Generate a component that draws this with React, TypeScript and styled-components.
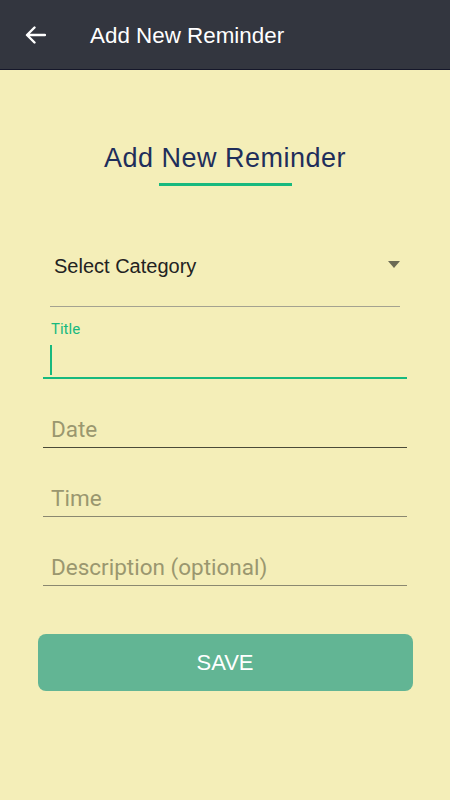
import React, { useState } from 'react';
import styled, { createGlobalStyle } from 'styled-components';

const GlobalStyle = createGlobalStyle`
  html, body {
    margin: 0;
    padding: 0;
    background: #f4eeb8;
  }
  * {
    box-sizing: border-box;
  }
`;

const App: React.FC = () => {
  const [title, setTitle] = useState('');
  const [date, setDate] = useState('');
  const [time, setTime] = useState('');
  const [description, setDescription] = useState('');

  return (
    <Page>
      <GlobalStyle />
      <TopBar>
        <BackButton aria-label="Back">
          <svg width="21" height="18" viewBox="0 0 21 18" fill="none">
            <path
              d="M20 9H2.5M9.5 1.5L2 9l7.5 7.5"
              stroke="#ffffff"
              strokeWidth="2.4"
              strokeLinecap="round"
              strokeLinejoin="round"
            />
          </svg>
        </BackButton>
        <BarTitle>Add New Reminder</BarTitle>
      </TopBar>

      <Content>
        <Heading>Add New Reminder</Heading>
        <HeadingLine />

        <SelectRow>
          <SelectText>Select Category</SelectText>
          <Caret />
        </SelectRow>

        <Field focused>
          <FloatingLabel>Title</FloatingLabel>
          <InputWrap>
            <Cursor />
            <TextInput value={title} onChange={(e) => setTitle(e.target.value)} />
          </InputWrap>
        </Field>

        <Field dark>
          <TextInput
            placeholder="Date"
            value={date}
            onChange={(e) => setDate(e.target.value)}
          />
        </Field>

        <Field>
          <TextInput
            placeholder="Time"
            value={time}
            onChange={(e) => setTime(e.target.value)}
          />
        </Field>

        <Field>
          <TextInput
            placeholder="Description (optional)"
            value={description}
            onChange={(e) => setDescription(e.target.value)}
          />
        </Field>

        <SaveButton>SAVE</SaveButton>
      </Content>
    </Page>
  );
};

const Page = styled.div`
  width: 450px;
  min-height: 800px;
  background: #f4eeb8;
  display: flex;
  flex-direction: column;
`;

const TopBar = styled.header`
  height: 70px;
  background: #33363f;
  border-bottom: 1px solid #15172a;
  display: flex;
  align-items: center;
  padding-left: 25px;
`;

const BackButton = styled.button`
  background: none;
  border: none;
  padding: 0;
  width: 21px;
  height: 18px;
  display: flex;
  margin-right: 44px;
  margin-top: 1px;
`;

const BarTitle = styled.h1`
  margin: 2px 0 0;
  font-family: 'Liberation Sans', Arial, sans-serif;
  font-weight: normal;
  font-size: 22.4px;
  color: #ffffff;
`;

const Content = styled.main`
  display: flex;
  flex-direction: column;
  align-items: center;
`;

const Heading = styled.h2`
  margin: 73px 0 0;
  font-family: 'Liberation Sans', Arial, sans-serif;
  font-weight: normal;
  font-size: 27px;
  letter-spacing: 0.5px;
  line-height: 30px;
  color: #1f2e5b;
`;

const HeadingLine = styled.div`
  width: 133px;
  height: 3px;
  background: #17b97e;
  margin-top: 10px;
`;

const SelectRow = styled.div`
  width: 350px;
  margin-top: 68px;
  display: flex;
  align-items: center;
  justify-content: space-between;
  padding: 0 0 28px 4px;
  border-bottom: 1px solid #a4a290;
`;

const SelectText = styled.span`
  font-family: 'Liberation Sans', Arial, sans-serif;
  font-size: 20px;
  line-height: 24px;
  color: #222222;
`;

const Caret = styled.span`
  width: 0;
  height: 0;
  border-left: 6px solid transparent;
  border-right: 6px solid transparent;
  border-top: 7px solid #6b6a55;
  margin-top: -4px;
`;

const Field = styled.div<{ focused?: boolean; dark?: boolean }>`
  width: 364px;
  margin-top: ${(p) => (p.focused ? '13px' : '35px')};
  display: flex;
  flex-direction: column;
  padding: 0 8px ${(p) => (p.focused ? '1px' : '3px')};
  border-bottom: ${(p) =>
    p.focused ? '2.5px solid #17b97e' : p.dark ? '1px solid #4a4a38' : '1px solid #8a8870'};
`;

const FloatingLabel = styled.label`
  font-family: Roboto, sans-serif;
  font-size: 15px;
  line-height: 18px;
  color: #17b97e;
`;

const InputWrap = styled.div`
  display: flex;
  align-items: center;
  height: 36px;
  margin-top: 2px;
  position: relative;
`;

const Cursor = styled.span`
  position: absolute;
  left: -1px;
  top: 5px;
  width: 2px;
  height: 30px;
  background: #17b97e;
`;

const TextInput = styled.input`
  width: 100%;
  border: none;
  outline: none;
  background: transparent;
  padding: 0;
  font-family: Roboto, sans-serif;
  font-size: 22.5px;
  line-height: 30px;
  height: 30px;
  color: #333333;

  &::placeholder {
    color: #9a976f;
  }
`;

const SaveButton = styled.button`
  width: 375px;
  height: 57px;
  margin-top: 48px;
  border: none;
  border-radius: 8px;
  background: #62b594;
  color: #ffffff;
  font-family: 'Liberation Sans', Arial, sans-serif;
  font-size: 22px;
  padding-top: 2px;
  cursor: pointer;
`;

export default App;
